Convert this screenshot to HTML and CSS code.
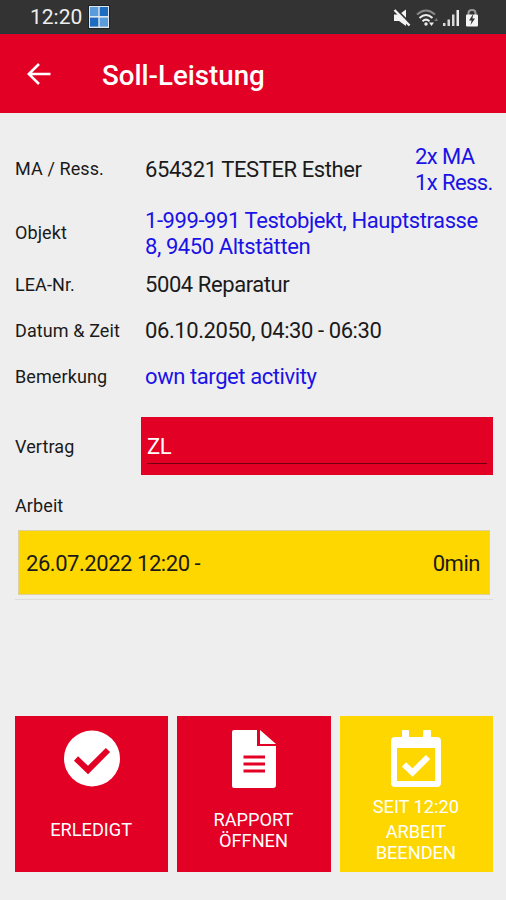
FILE: index.html
```
<!DOCTYPE html>
<html lang="de">

<head>
    <meta charset="UTF-8">
    <meta name="viewport" content="width=device-width, initial-scale=1.0">
    <title>Soll-Leistung</title>
    <link rel="stylesheet" href="styles.css">
</head>

<body>
    <div class="statusbar">
        <span class="clock">12:20</span>
        <svg class="app-icon" width="22" height="24" viewBox="0 0 22 24">
            <rect x="0.5" y="0.5" width="21" height="23" fill="#dfe7ee" stroke="#1c2226"/>
            <rect x="2" y="2" width="8.3" height="9" fill="#5a9bdc"/>
            <rect x="11.7" y="2" width="8.3" height="9" fill="#1d6cc0"/>
            <rect x="2" y="12.6" width="8.3" height="9" fill="#1d6cc0"/>
            <rect x="11.7" y="12.6" width="8.3" height="9" fill="#5a9bdc"/>
        </svg>
        <div class="system-icons">
            <svg width="18" height="18" viewBox="0 0 18 18">
                <path d="M1 5.500h5l7-5V17l-7-5H1z" fill="#f4f4f4"/>
                <path d="M2.500 -0.500L18 15" stroke="#333" stroke-width="1.800"/>
                <path d="M1.500 1L16.500 16.500" stroke="#f4f4f4" stroke-width="2.400"/>
            </svg>
            <svg width="22" height="18" viewBox="0 0 22 18">
                <g fill="none" stroke-width="2">
                    <path d="M1 5.500Q10 -2.500 19 5.500" stroke="#8a8a8a"/>
                    <path d="M3.500 9Q10 3 16.500 9" stroke="#eee"/>
                    <path d="M6.500 12.300Q10 9 13.500 12.300" stroke="#eee"/>
                </g>
                <circle cx="10" cy="15" r="1.700" fill="#eee"/>
                <path d="M13 13.500h5L15.500 17z" fill="#eee"/>
                <path d="M18 12l2.500-3 1.500 3z" fill="#777"/>
            </svg>
            <svg width="17" height="18" viewBox="0 0 17 18">
                <path d="M0 14h2.500v3H0zM4.500 10.500H7V17H4.500zM9 5.500h2.500V17H9z" fill="#d8d8d8"/>
                <path d="M13.500 1H16v16h-2.500z" fill="#eee"/>
            </svg>
            <svg width="14" height="18" viewBox="0 0 14 18">
                <path d="M3.500 6V4Q3.500 1 7 1T10.500 4V6" fill="none" stroke="#999" stroke-width="2"/>
                <rect x="1" y="5.500" width="12" height="12" rx="1" fill="#f4f4f4"/>
                <path d="M8.500 4.500L4 11.500h2.600L5.500 16 10 9.500H7.400z" fill="#333"/>
            </svg>
        </div>
    </div>

    <header class="toolbar">
        <svg width="24" height="24" viewBox="0 0 24 24">
            <path d="M12 2L1.800 12L12 22M1.800 12H23.500" fill="none" stroke="#fff" stroke-width="2.600"/>
        </svg>
        <h1>Soll-Leistung</h1>
    </header>

    <main>
        <div class="row row-ress">
            <label>MA / Ress.</label>
            <span class="value">654321 TESTER Esther</span>
            <a class="link count">2x MA<br>1x Ress.</a>
        </div>
        <div class="row row-objekt">
            <label>Objekt</label>
            <a class="value link">1-999-991 Testobjekt, Hauptstrasse<br>8, 9450 Altstätten</a>
        </div>
        <div class="row">
            <label>LEA-Nr.</label>
            <span class="value">5004 Reparatur</span>
        </div>
        <div class="row">
            <label>Datum &amp; Zeit</label>
            <span class="value">06.10.2050, 04:30 - 06:30</span>
        </div>
        <div class="row">
            <label>Bemerkung</label>
            <a class="value link">own target activity</a>
        </div>
        <div class="row row-vertrag">
            <label>Vertrag</label>
            <div class="select"><span>ZL</span></div>
        </div>

        <label class="section">Arbeit</label>
        <div class="work-list">
            <div class="work">
                <span>26.07.2022 12:20 -</span>
                <span>0min</span>
            </div>
        </div>

        <div class="buttons">
            <button>
                <svg width="56" height="58" viewBox="0 0 56 58">
                    <circle cx="28" cy="28.500" r="28" fill="#fff"/>
                    <path d="M12 28.500L24 40L44 20" fill="none" stroke="#e30025" stroke-width="6"/>
                </svg>
                <span class="text">ERLEDIGT</span>
            </button>
            <button>
                <svg width="44" height="58" viewBox="0 0 44 58">
                    <path d="M2 0H25V16H44V55Q44 58 41 58H2Q0 58 0 56V2Q0 0 2 0z" fill="#fff"/>
                    <path d="M28 0V14H44z" fill="#fff"/>
                    <path d="M11.500 27H33M11.500 34H33M11.500 41H33" stroke="#e30025" stroke-width="3"/>
                </svg>
                <span class="text">RAPPORT<br>ÖFFNEN</span>
            </button>
            <button class="running">
                <svg width="50" height="58" viewBox="0 0 50 58">
                    <path d="M11 1Q11 0 12 0H17Q18 0 18 1V7H32V1Q32 0 33 0H39Q40 0 40 1V7H46Q50 7 50 11V53Q50 57 46 57H4Q0 57 0 53V11Q0 7 4 7H11zM6 18V51H44V18z" fill="#fff" fill-rule="evenodd"/>
                    <path d="M13 34.500L21.500 42.500L37 27" fill="none" stroke="#fff" stroke-width="6"/>
                </svg>
                <span class="since">SEIT 12:20</span>
                <span class="text">ARBEIT<br>BEENDEN</span>
            </button>
        </div>
    </main>
</body>

</html>
```

FILE: styles.css
```
* {
    box-sizing: border-box;
}

body {
    font-family: Roboto, "Liberation Sans", sans-serif;
    margin: 0;
    height: 900px;
    background-color: #eee;
    color: #1a1a1a;
    overflow: hidden;
}

.statusbar {
    display: flex;
    align-items: center;
    height: 34px;
    padding: 1px 27px 0 30px;
    background-color: #333;
    border-bottom: 1px solid #22383a;
}

.clock {
    color: #eee;
    font-size: 21px;
    width: 52px;
}

.app-icon {
    margin-left: 6px;
}

.system-icons {
    display: flex;
    align-items: center;
    gap: 5px;
    margin: 1px 0 0 auto;
}

.toolbar {
    display: flex;
    align-items: center;
    height: 79px;
    padding: 0 27px;
    background-color: #e30025;
}

h1 {
    margin: 4px 0 0 51px;
    color: #fff;
    font-size: 27.7px;
    font-weight: 500;
}

main {
    padding: 25px 13px 0 15px;
}

.row {
    display: flex;
    align-items: center;
    height: 46px;
}

.row-ress {
    height: 64px;
}

.row-objekt {
    height: 60px;
    padding: 6px 0 2px;
}

label {
    flex: none;
    width: 130px;
    font-size: 18px;
    letter-spacing: 0.1px;
}

.row label {
    padding-bottom: 2px;
}

.row-ress label,
.row-objekt label {
    padding-bottom: 4px;
}

.value,
.count {
    font-size: 22px;
    line-height: 26px;
    letter-spacing: -0.42px;
    white-space: nowrap;
}

.link {
    color: #1a12e6;
}

.count {
    width: 78px;
    margin-left: auto;
    letter-spacing: -0.6px;
}

.row-vertrag {
    height: 58px;
    margin-top: 17px;
}

.row-vertrag label {
    width: 126px;
    padding-bottom: 0;
}

.select {
    flex: 1;
    height: 58px;
    padding: 17px 6px 0;
    background-color: #e30025;
    color: #fff;
    font-size: 22px;
    letter-spacing: -0.4px;
}

.select span {
    display: block;
    height: 30px;
    line-height: 26px;
    border-bottom: 1px solid #6e0010;
}

.section {
    display: block;
    height: 55px;
    padding-top: 20px;
    line-height: 22px;
}

.work-list {
    height: 70px;
    padding: 0 3px;
    border-bottom: 1px solid #ddd;
}

.work {
    display: flex;
    align-items: center;
    justify-content: space-between;
    height: 65px;
    padding: 2px 9px 0 7px;
    background-color: #ffd700;
    border: 1px solid #dcd0a0;
    font-size: 22px;
    letter-spacing: -0.45px;
}

.buttons {
    display: flex;
    gap: 9px;
    margin-top: 116px;
}

button {
    display: flex;
    flex-direction: column;
    align-items: center;
    flex: 1;
    height: 156px;
    padding: 14px 1px 0 0;
    border: none;
    background-color: #e30025;
    color: #fff;
    font-family: inherit;
    font-size: 18.2px;
    line-height: 21px;
}

button svg {
    flex: none;
    margin-left: 1px;
}

.text {
    display: flex;
    flex-direction: column;
    justify-content: center;
    flex: 1;
    padding-bottom: 1px;
}

.running {
    background-color: #ffd700;
}

.since {
    margin-top: 8px;
}

.running .text {
    justify-content: flex-start;
    padding-top: 4px;
}
```
